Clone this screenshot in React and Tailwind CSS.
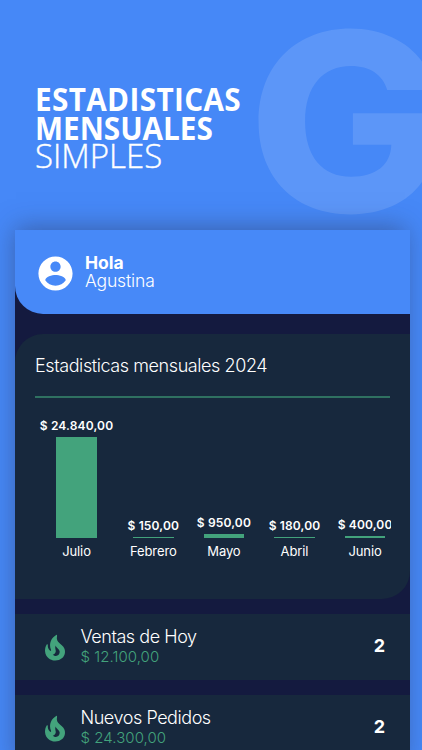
const months = [
  { name: "Julio", amount: "$ 24.840,00", height: 101 },
  { name: "Febrero", amount: "$ 150,00", height: 1 },
  { name: "Mayo", amount: "$ 950,00", height: 4 },
  { name: "Abril", amount: "$ 180,00", height: 1 },
  { name: "Junio", amount: "$ 400,00", height: 2 },
];

const totals = [
  { title: "Ventas de Hoy", amount: "$ 12.100,00", count: 2 },
  { title: "Nuevos Pedidos", amount: "$ 24.300,00", count: 2 },
];

function AccountIcon() {
  return (
    <svg viewBox="0 0 24 24" className="mt-[3px] h-[41px] w-[41px] fill-white">
      <path d="M12 2C6.48 2 2 6.48 2 12s4.48 10 10 10 10-4.48 10-10S17.52 2 12 2zm0 3c1.66 0 3 1.34 3 3s-1.34 3-3 3-3-1.34-3-3 1.34-3 3-3zm0 14.2c-2.5 0-4.71-1.28-6-3.22.03-1.99 4-3.08 6-3.08 1.99 0 5.97 1.09 6 3.08-1.29 1.94-3.5 3.22-6 3.22z" />
    </svg>
  );
}

function FireIcon() {
  return (
    <svg viewBox="0 0 24 24" className="mt-[3px] h-[30px] w-[30px] fill-[#43a37c]">
      <path d="M19.48 12.35c-1.57-4.08-7.16-4.3-5.81-10.23.1-.44-.37-.78-.75-.55C9.29 3.71 6.68 8 8.87 13.62c.18.46-.36.89-.75.59-1.81-1.37-2-3.34-1.84-4.75.06-.52-.62-.77-.91-.34C4.69 10.16 4 11.84 4 14.37c.38 5.6 5.11 7.32 6.81 7.54 2.43.31 5.06-.14 6.95-1.87 2.08-1.93 2.84-5.01 1.72-7.69zm-9.28 5.03c1.44-.35 2.18-1.39 2.38-2.31.33-1.43-.96-2.83-.09-5.09.33 1.87 3.27 3.04 3.27 5.08.08 2.53-2.66 4.7-5.56 2.32z" />
    </svg>
  );
}

function Chart() {
  return (
    <div className="flex h-[143px] w-[356px] items-end overflow-hidden">
      {months.map((m) => (
        <div key={m.name} className="flex w-[70.6px] shrink-0 flex-col items-center first:w-[83px]">
          <span className="text-[12px] leading-[15px] font-semibold tracking-[0.15px] whitespace-nowrap">{m.amount}</span>
          <div className="mt-[4px] w-[40.5px] bg-[#43a37c]" style={{ height: m.height }} />
          <span className="mt-[5px] text-[13px] leading-4 tracking-[-0.1px]">{m.name}</span>
        </div>
      ))}
    </div>
  );
}

function TotalRow({ title, amount, count }) {
  return (
    <div className="flex h-[66px] items-center bg-[#17283d] pr-[25px] pb-[2px] pl-[25px]">
      <FireIcon />
      <div className="ml-[10.5px] flex-1">
        <div className="text-[18px] leading-5 font-light tracking-[-0.45px]">{title}</div>
        <div className="text-[15px] leading-[19px] font-light tracking-[0.05px] text-[#43a37c]">{amount}</div>
      </div>
      <span className="text-[18px] leading-5 font-bold">{count}</span>
    </div>
  );
}

export default function App() {
  return (
    <div className="relative h-[750px] w-[422px] overflow-hidden bg-[#4688f7] font-['Inter',sans-serif] text-white">
      <div className="absolute top-[-36px] left-[247.5px] origin-left scale-x-106 text-[249px] leading-[316px] font-extrabold text-white/12 select-none">
        G
      </div>
      <h1 className="relative h-[230px] pt-[85px] pl-[35px] font-['Open_Sans',sans-serif] text-[33px] leading-[28.6px]">
        <span className="block w-fit origin-left scale-x-90 font-bold tracking-[0.4px]">ESTADISTICAS</span>
        <span className="block w-fit origin-left scale-x-90 font-bold">MENSUALES</span>
        <span className="block w-fit font-light [-webkit-text-stroke:0.4px_white]">SIMPLES</span>
      </h1>
      <main className="relative ml-[15px] h-[540px] w-[395px] bg-[#141a3f] shadow-[-2px_-5px_24px_-3px_rgba(45,55,90,0.5)]">
        <header className="flex h-[84px] items-center rounded-bl-[28px] bg-[#4789f8] pl-[19.5px]">
          <AccountIcon />
          <div className="ml-[9.5px] text-[17.5px] leading-[18px]">
            <div className="font-bold">Hola</div>
            <div className="font-light tracking-[-0.15px]">Agustina</div>
          </div>
        </header>
        <section className="mt-5 h-[265px] rounded-tl-[28px] rounded-br-[28px] bg-[#17283d] pt-[20px] pl-[20px]">
          <h2 className="h-[42px] text-[18px] leading-[24px] font-light tracking-[-0.42px]">Estadisticas mensuales 2024</h2>
          <div className="mb-[18px] h-[2px] w-[355px] bg-[#2f7161]" />
          <Chart />
        </section>
        <div className="mt-[15px] flex flex-col gap-[15px]">
          {totals.map((t) => (
            <TotalRow key={t.title} {...t} />
          ))}
        </div>
      </main>
    </div>
  );
}
